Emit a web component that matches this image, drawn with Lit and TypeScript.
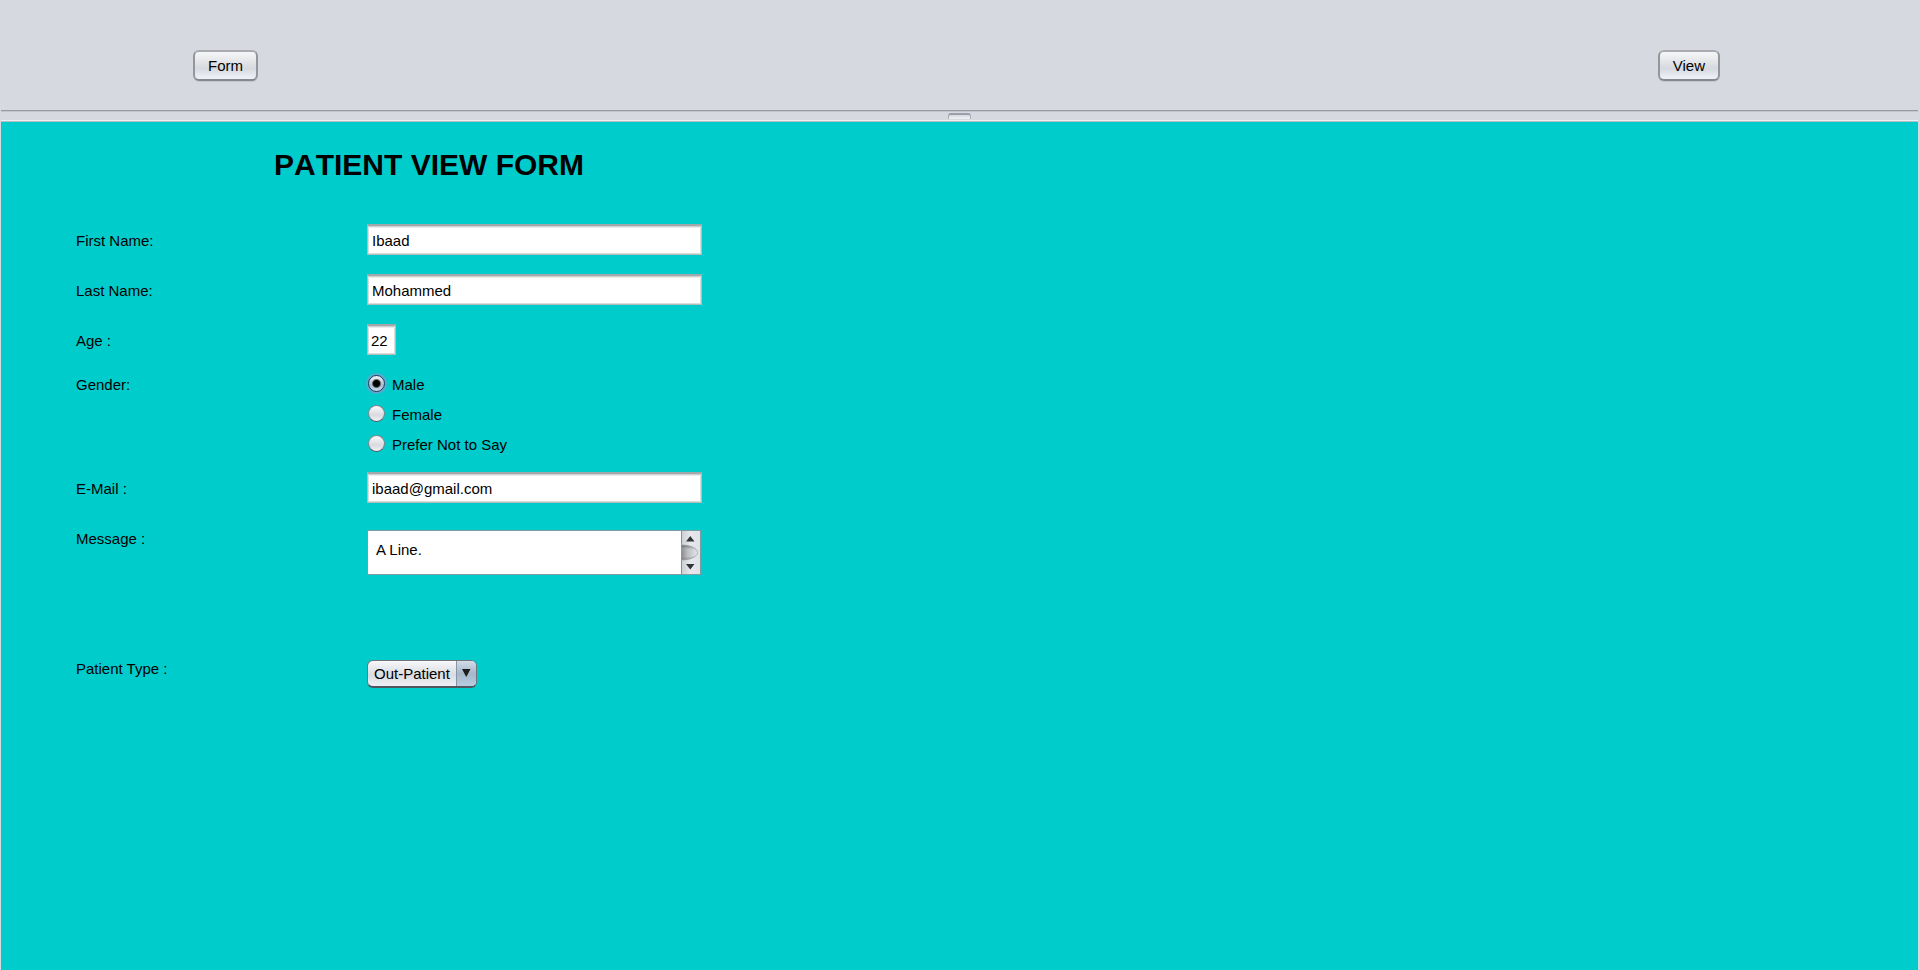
import { LitElement, html, css } from "lit";
import { customElement, state } from "lit/decorators.js";

@customElement("app-root")
export class AppRoot extends LitElement {
  static styles = css`
    :host {
      display: flex;
      flex-direction: column;
      min-height: 100vh;
      box-sizing: border-box;
      padding: 0 2px 0 1px;
      background: #d6d9df;
      color: #000;
      font: 15px/18px "Liberation Sans", Arial, sans-serif;
    }
    * {
      box-sizing: border-box;
    }
    .toolbar {
      display: flex;
      justify-content: space-between;
      padding: 50px 198px 29px 192px;
    }
    .button {
      height: 31px;
      padding: 1px 13px 0;
      border: 2px solid;
      border-color: #a9abb0 #94969b #85888e;
      border-radius: 6px;
      background: linear-gradient(#f6f7f8, #dddfe3 48%, #d6d9df 62%, #f0f3fa);
      box-shadow: 0 1px 0 #c3c6cc;
      font: inherit;
      color: inherit;
    }
    .divider {
      display: flex;
      justify-content: center;
      align-items: center;
      height: 12px;
      border-top: 1px solid #979aa3;
      border-bottom: 1px solid #b9bcc1;
      box-shadow: inset 0 1px 0 #c3c6ce, inset 0 -1px 0 #eceef1;
    }
    .grip {
      width: 23px;
      height: 6px;
      border: 1px solid #a9adb5;
      border-top: 2px solid #9a9ea8;
      border-bottom: 0;
      border-radius: 3px 3px 0 0;
      background: linear-gradient(#d6d9df, #f2f3f6);
    }
    .panel {
      flex: 1;
      padding: 26px 75px 40px;
      background: #00cccc;
    }
    .title {
      margin: 0 0 42px 198px;
      font-size: 30px;
      line-height: 34px;
      font-weight: bold;
      font-kerning: none;
    }
    .form {
      display: flex;
      flex-direction: column;
      gap: 17px;
    }
    .row {
      display: grid;
      grid-template-columns: 291px minmax(0, 335px);
      align-items: start;
    }
    .tall {
      min-height: 113px;
    }
    .label {
      line-height: 33px;
    }
    .gender {
      line-height: 22px;
    }
    .input {
      width: 100%;
      height: 31px;
      padding: 0 4px;
      border: 1px solid #b4bcbe;
      border-top: 2px solid #a4a8aa;
      border-radius: 0;
      outline: 0;
      background: #fff;
      box-shadow: inset 0 1px 0 #cfcfcf, inset 0 2px 0 #ececec,
        inset 1px 0 0 #dcdcdc, inset -1px -1px 0 #dcdcdc;
      font: inherit;
      color: inherit;
    }
    .age {
      width: 29px;
      padding: 0 3px;
    }
    .options {
      display: flex;
      flex-direction: column;
      gap: 8px;
      margin-bottom: -1px;
    }
    .option {
      display: flex;
      align-items: flex-start;
      gap: 7px;
      line-height: 22px;
    }
    .radio {
      appearance: none;
      width: 17px;
      height: 17px;
      margin: 1px 0 0 1px;
      border: 1px solid #82868c;
      border-bottom-color: #55595f;
      border-radius: 50%;
      outline: 0;
      background: linear-gradient(#fbfbfc, #d8dae0 60%, #f0f2f6);
    }
    .radio:checked {
      border-color: #2b3b55;
      background: radial-gradient(circle, #000 3px, transparent 5px),
        linear-gradient(#f2f5f9, #a9bccd 60%, #c8dbec);
      box-shadow: 0 0 0 1px #6a9fd0, 0 0 1px 2px #4fb0d0;
    }
    .message {
      display: flex;
      height: 45px;
      margin: 8px 1px 0 0;
      border: 1px solid #7f9aa0;
    }
    .text {
      flex: 1;
      min-width: 0;
      height: 43px;
      padding: 10px 8px 0;
      border: 0;
      outline: 0;
      resize: none;
      overflow: hidden;
      background: #fff;
      font: inherit;
      color: inherit;
    }
    .scroll {
      width: 19px;
      height: 43px;
      flex: none;
    }
    .select {
      appearance: none;
      width: 110px;
      height: 28px;
      margin-top: 8px;
      padding: 1px 24px 0 6px;
      border: 1px solid #6f757c;
      border-bottom: 2px solid #50565e;
      border-radius: 6px;
      outline: 0;
      font: inherit;
      color: inherit;
      background: linear-gradient(#f8f8fa, #d9dce2 55%, #eef0f5);
    }
    .combo {
      display: grid;
      justify-content: start;
    }
    .combo > * {
      grid-area: 1 / 1;
    }
    .arrow {
      justify-self: end;
      width: 20px;
      height: 25px;
      margin: 9px 1px 0 0;
      pointer-events: none;
    }
  `;

  @state() private gender = "Male";

  private genders = ["Male", "Female", "Prefer Not to Say"];

  render() {
    return html`
      <header class="toolbar">
        <button class="button" type="button">Form</button>
        <button class="button" type="button">View</button>
      </header>
      <div class="divider" role="separator"><span class="grip"></span></div>
      <main class="panel">
        <h1 class="title">PATIENT VIEW FORM</h1>
        <form class="form">
          <div class="row">
            <label class="label" for="first">First Name:</label>
            <input class="input" id="first" type="text" value="Ibaad" />
          </div>
          <div class="row">
            <label class="label" for="last">Last Name:</label>
            <input class="input" id="last" type="text" value="Mohammed" />
          </div>
          <div class="row">
            <label class="label" for="age">Age :</label>
            <input class="input age" id="age" type="text" value="22" />
          </div>
          <div class="row" role="radiogroup" aria-labelledby="gender">
            <span class="gender" id="gender">Gender:</span>
            <div class="options">
              ${this.genders.map(
                (g) => html`<label class="option">
                  <input
                    class="radio"
                    type="radio"
                    name="gender"
                    .checked=${g === this.gender}
                    @change=${() => (this.gender = g)}
                  />${g}</label
                >`
              )}
            </div>
          </div>
          <div class="row">
            <label class="label" for="email">E-Mail :</label>
            <input class="input" id="email" type="email" value="ibaad@gmail.com" />
          </div>
          <div class="row tall">
            <label class="label" for="message">Message :</label>
            <div class="message">
              <textarea class="text" id="message" .value=${"A Line."}></textarea>
              <svg class="scroll" viewBox="0 0 19 43" aria-hidden="true">
                <defs>
                  <linearGradient id="track">
                    <stop offset="0" stop-color="#c9ccd2" />
                    <stop offset=".5" stop-color="#e6e8ec" />
                    <stop offset="1" stop-color="#dfe2e8" />
                  </linearGradient>
                  <linearGradient id="thumb">
                    <stop offset="0" stop-color="#77797e" />
                    <stop offset=".4" stop-color="#b4b6bb" />
                    <stop offset="1" stop-color="#e2e4e9" />
                  </linearGradient>
                  <linearGradient id="shade" x2="0" y2="1">
                    <stop offset="0" stop-color="#44464a" stop-opacity=".7" />
                    <stop offset=".4" stop-color="#fff" stop-opacity=".1" />
                    <stop offset=".65" stop-color="#fff" stop-opacity=".1" />
                    <stop offset="1" stop-color="#55575c" stop-opacity=".5" />
                  </linearGradient>
                </defs>
                <path d="M0 0h19v43H0z" fill="url(#track)" />
                <path d="M.5 0v43" stroke="#8d9096" />
                <path d="M0 14c9 0 16.500 3 16.500 7.500S9 29 0 29z" fill="url(#thumb)" />
                <path
                  d="M0 14c9 0 16.500 3 16.500 7.500S9 29 0 29z"
                  fill="url(#shade)"
                  stroke="#a0a2a8"
                  stroke-width=".8"
                />
                <path d="M5 10.500h8.500L9.250 5zM5 33h8.500l-4.250 5.500z" fill="#323438" />
              </svg>
            </div>
          </div>
          <div class="row">
            <label class="label" for="type">Patient Type :</label>
            <div class="combo">
              <select class="select" id="type">
                <option>Out-Patient</option>
                <option>In-Patient</option>
              </select>
              <svg class="arrow" viewBox="0 0 20 25" aria-hidden="true">
                <defs>
                  <linearGradient id="blue" x2="0" y2="1">
                    <stop offset="0" stop-color="#d3dde8" />
                    <stop offset=".5" stop-color="#a5b7c9" />
                    <stop offset="1" stop-color="#b9cde0" />
                  </linearGradient>
                </defs>
                <path d="M0 0h15q5 0 5 5v15q0 5-5 5H0z" fill="url(#blue)" />
                <path d="M.5 0v25" stroke="#8796a6" />
                <path d="M6 8h8.500l-4.250 8z" fill="#1c1c1c" />
              </svg>
            </div>
          </div>
        </form>
      </main>
    `;
  }
}
